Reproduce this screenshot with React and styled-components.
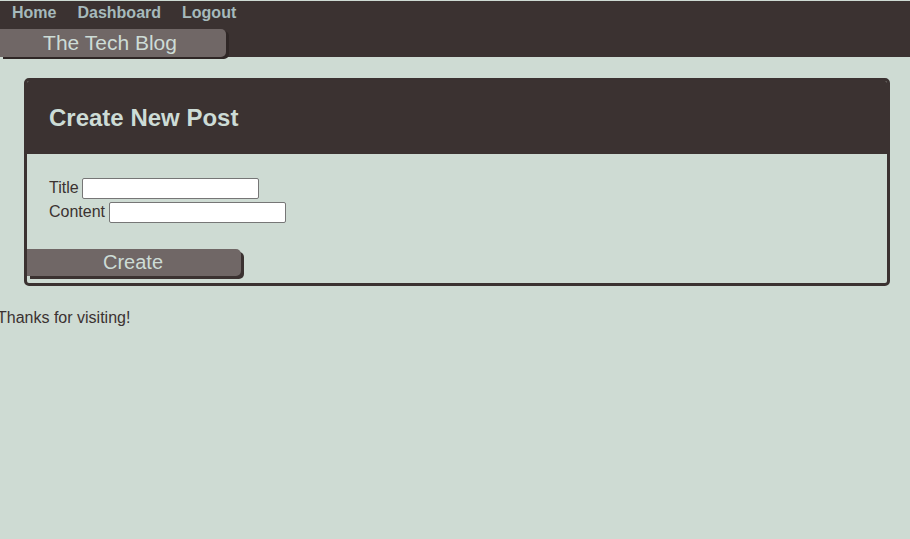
import React from 'react'
import styled, { createGlobalStyle } from 'styled-components'

const GlobalStyle = createGlobalStyle`
  body {
    margin: 0;
    background-color: #cedbd3;
    font-family: 'Liberation Sans', Arial, sans-serif;
    color: #3b3231;
    overflow: hidden;
  }
`

const Page = styled.div`
  padding-top: 1px;
  min-height: 538px;
`

const Header = styled.header`
  background-color: #3b3231;
  height: 56px;
  display: flex;
  flex-direction: column;
`

const Nav = styled.nav`
  display: flex;
  gap: 21px;
  padding: 3px 0 0 12px;
  height: 25px;
  box-sizing: border-box;
`

const NavLink = styled.a`
  color: #a6babc;
  font-weight: bold;
  font-size: 16px;
  text-decoration: none;
  line-height: 18px;
`

const BrandButton = styled.button`
  width: 226px;
  height: 28px;
  margin-top: 3px;
  border: none;
  border-radius: 0 5px 5px 0;
  background-color: #706766;
  color: #cddcd6;
  font-family: inherit;
  font-size: 21px;
  padding: 0 6px 0 0;
  box-shadow: 3px 2px 0 #2f2726;
  text-align: center;
`

const Main = styled.main`
  padding: 21px 20px 0 24px;
`

const Card = styled.section`
  border: 3px solid #3b3231;
  border-radius: 5px;
  overflow: hidden;
`

const CardHeader = styled.div`
  background-color: #3b3231;
  height: 73px;
  display: flex;
  align-items: center;
  padding: 0 22px;
  h2 {
    margin: 0;
    color: #cddcd6;
    font-size: 24px;
    font-weight: bold;
  }
`

const Form = styled.form`
  padding: 22px 0 7px 0;
  display: flex;
  flex-direction: column;
`

const Field = styled.label`
  display: flex;
  align-items: center;
  gap: ${(p) => p.$gap}px;
  padding-left: 22px;
  font-size: 16px;
  height: 24px;
  color: #3b3231;
`

const Input = styled.input`
  width: 177px;
  height: 21px;
  box-sizing: border-box;
  border: 1px solid #767676;
  border-radius: 2px;
  background: #fff;
`

const CreateButton = styled.button`
  align-self: flex-start;
  margin-top: 25px;
  width: 214px;
  height: 27px;
  border: none;
  border-radius: 0 5px 5px 0;
  background-color: #706766;
  color: #cddcd6;
  font-family: inherit;
  font-size: 20px;
  padding: 0 2px 0 0;
  box-shadow: 3px 3px 0 #3b3231;
`

const Footer = styled.footer`
  margin: 23px 0 0 -3px;
  font-size: 16px;
  color: #3b3231;
`

export default function App() {
  return (
    <Page>
      <GlobalStyle />
      <Header>
        <Nav>
          <NavLink href="#">Home</NavLink>
          <NavLink href="#">Dashboard</NavLink>
          <NavLink href="#">Logout</NavLink>
        </Nav>
        <BrandButton>The Tech Blog</BrandButton>
      </Header>
      <Main>
        <Card>
          <CardHeader>
            <h2>Create New Post</h2>
          </CardHeader>
          <Form onSubmit={(e) => e.preventDefault()}>
            <Field $gap={3}>
              Title <Input type="text" />
            </Field>
            <Field $gap={4}>
              Content <Input type="text" />
            </Field>
            <CreateButton type="submit">Create</CreateButton>
          </Form>
        </Card>
      </Main>
      <Footer>Thanks for visiting!</Footer>
    </Page>
  )
}
